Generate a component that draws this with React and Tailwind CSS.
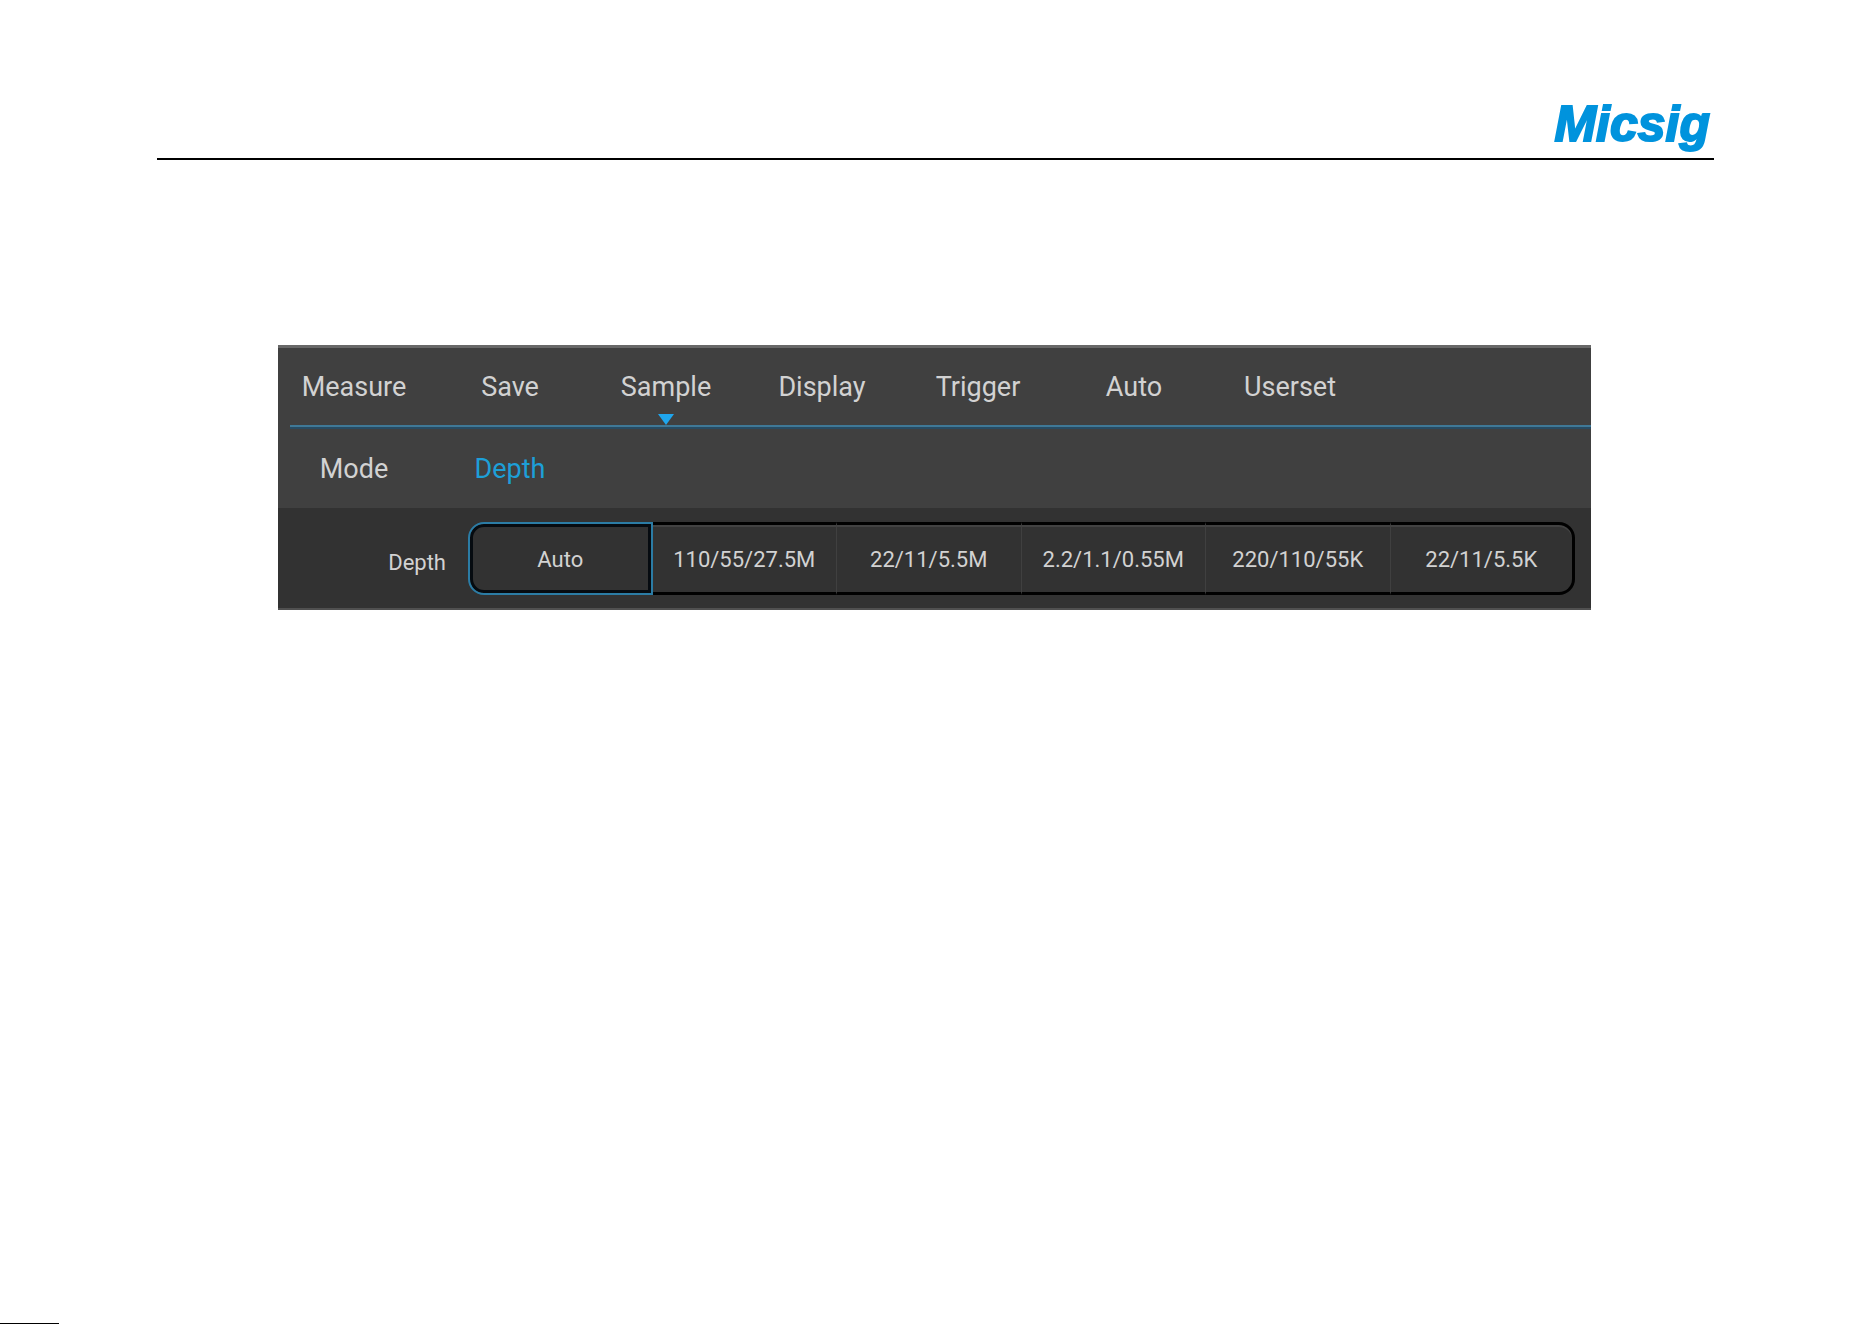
import { useState } from 'react';

const TABS = ['Measure', 'Save', 'Sample', 'Display', 'Trigger', 'Auto', 'Userset'];
const SECTIONS = ['Mode', 'Depth'];
const DEPTHS = ['Auto', '110/55/27.5M', '22/11/5.5M', '2.2/1.1/0.55M', '220/110/55K', '22/11/5.5K'];

function PageHeader() {
  return (
    <header className="flex justify-end border-b-2 border-black px-1 pt-[92px] pb-0.5">
      <span className="font-['Liberation_Sans',Arial,sans-serif] text-[50px] leading-16 font-bold italic text-[#0093dd] [-webkit-text-stroke:2px_#0093dd]">
        Micsig
      </span>
    </header>
  );
}

function Tab({ label, active, onClick }) {
  return (
    <button
      type="button"
      role="tab"
      aria-selected={active}
      onClick={onClick}
      className="relative h-full w-39 pt-0.5 text-center"
    >
      {label}
      {active && (
        <svg
          viewBox="0 0 16 11"
          className="absolute bottom-0 left-1/2 h-[11px] w-4 -translate-x-1/2"
          aria-hidden="true"
        >
          <path d="M0 0h16L8 11z" fill="#1fa6ee" />
        </svg>
      )}
    </button>
  );
}

function DepthOption({ label, active, onClick }) {
  return (
    <button
      type="button"
      aria-pressed={active}
      onClick={onClick}
      className={
        active
          ? 'rounded-l-2xl border-2 border-[#2b7ca5] pt-0.5 text-center shadow-[inset_0_0_0_3px_#060b10]'
          : 'border-y-3 border-r border-y-black border-r-[#404040] pt-0.5 text-center shadow-[inset_0_2px_0_#424242] last:rounded-r-2xl last:border-r-3 last:border-r-black'
      }
    >
      {label}
    </button>
  );
}

export default function App() {
  const [tab, setTab] = useState('Sample');
  const [section, setSection] = useState('Depth');
  const [depth, setDepth] = useState('Auto');

  return (
    <div className="flex min-h-screen flex-col bg-white font-[Roboto,sans-serif]">
      <div className="pr-[158px] pl-[157px]">
        <PageHeader />

        <main className="mt-[185px] mr-[123px] ml-[121px] border-t-3 border-b-2 border-t-[#686868] border-b-[#505050] bg-[#404040] text-[27px] text-[#d2d2d2]">
          <div role="tablist" className="-ml-0.5 flex h-[77px]">
            {TABS.map((t) => (
              <Tab key={t} label={t} active={t === tab} onClick={() => setTab(t)} />
            ))}
          </div>
          <div className="ml-3 h-1 border-t-2 border-[#3f7896] bg-[#284b62]" />

          <nav className="-ml-0.5 flex h-[79px]">
            {SECTIONS.map((s) => (
              <button
                key={s}
                type="button"
                onClick={() => setSection(s)}
                className={s === section ? 'w-39 pt-0.5 text-[#1d9fd8]' : 'w-39 pt-0.5'}
              >
                {s}
              </button>
            ))}
          </nav>

          <div className="flex h-[100px] items-center bg-[#323232] pr-4 text-[22px]">
            <span id="depth-label" className="w-[190px] pt-2 pr-[22px] text-right">
              Depth
            </span>
            <div role="group" aria-labelledby="depth-label" className="grid h-[73px] flex-1 grid-cols-6">
              {DEPTHS.map((d) => (
                <DepthOption key={d} label={d} active={d === depth} onClick={() => setDepth(d)} />
              ))}
            </div>
          </div>
        </main>
      </div>

      <footer className="mt-auto">
        <div className="h-px w-[59px] bg-black" />
      </footer>
    </div>
  );
}
